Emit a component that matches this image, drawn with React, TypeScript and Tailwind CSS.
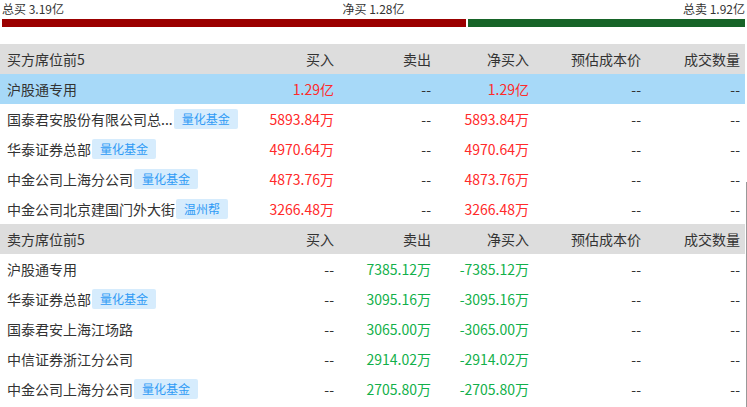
import React from 'react';

type Row = {
  name: string;
  tag?: string;
  buy: string;
  sell: string;
  net: string;
  highlight?: boolean;
};

const buyRows: Row[] = [
  { name: '沪股通专用', buy: '1.29亿', sell: '--', net: '1.29亿', highlight: true },
  { name: '国泰君安股份有限公司总...', tag: '量化基金', buy: '5893.84万', sell: '--', net: '5893.84万' },
  { name: '华泰证券总部', tag: '量化基金', buy: '4970.64万', sell: '--', net: '4970.64万' },
  { name: '中金公司上海分公司', tag: '量化基金', buy: '4873.76万', sell: '--', net: '4873.76万' },
  { name: '中金公司北京建国门外大街', tag: '温州帮', buy: '3266.48万', sell: '--', net: '3266.48万' },
];

const sellRows: Row[] = [
  { name: '沪股通专用', buy: '--', sell: '7385.12万', net: '-7385.12万' },
  { name: '华泰证券总部', tag: '量化基金', buy: '--', sell: '3095.16万', net: '-3095.16万' },
  { name: '国泰君安上海江场路', buy: '--', sell: '3065.00万', net: '-3065.00万' },
  { name: '中信证券浙江分公司', buy: '--', sell: '2914.02万', net: '-2914.02万' },
  { name: '中金公司上海分公司', tag: '量化基金', buy: '--', sell: '2705.80万', net: '-2705.80万' },
];

const cols = 'grid grid-cols-[240px_94px_97px_98px_112px_99px] items-center h-[30px] w-[745px] pr-[5px]';

function Header({ title }: { title: string }) {
  return (
    <div className={`${cols} bg-[#dddddd] text-[#333]`}>
      <div className="pl-[7px]">{title}</div>
      <div className="text-right">买入</div>
      <div className="text-right">卖出</div>
      <div className="text-right">净买入</div>
      <div className="text-right">预估成本价</div>
      <div className="text-right">成交数量</div>
    </div>
  );
}

function TableRow({ row, side }: { row: Row; side: 'buy' | 'sell' }) {
  const red = 'text-[#ff2a2a]';
  const green = 'text-[#12b04a]';
  return (
    <div className={`${cols} ${row.highlight ? 'bg-[#a7d9f8]' : 'bg-white'}`}>
      <div className="pl-[7px] flex items-center whitespace-nowrap">
        <span>{row.name}</span>
        {row.tag && (
          <span className="ml-px h-5 px-2 flex items-center rounded-[2px] bg-[#d6ecfd] text-[#2f9bf5] text-xs">
            {row.tag}
          </span>
        )}
      </div>
      <div className={`text-right ${side === 'buy' ? red : ''}`}>{row.buy}</div>
      <div className={`text-right ${side === 'sell' ? green : ''}`}>{row.sell}</div>
      <div className={`text-right ${side === 'buy' ? red : green}`}>{row.net}</div>
      <div className="text-right">--</div>
      <div className="text-right">--</div>
    </div>
  );
}

export default function App() {
  return (
    <div
      className="relative w-[747px] h-[407px] overflow-hidden bg-white text-[14px] text-[#333]"
      style={{ fontFamily: '"Noto Sans CJK SC", "Noto Sans", sans-serif' }}
    >
      {/* Summary */}
      <div className="flex items-center justify-between h-[17px] px-[2px] text-xs leading-none">
        <span>总买 3.19亿</span>
        <span>净买 1.28亿</span>
        <span>总卖 1.92亿</span>
      </div>
      <div className="flex gap-[2px] mt-[2px] mx-[2px] w-[743px] h-2">
        <div className="w-[464px] bg-[#9b0000]" />
        <div className="flex-1 bg-[#176428]" />
      </div>

      <div className="mt-[17px]">
        <Header title="买方席位前5" />
        {buyRows.map((r, i) => (
          <TableRow key={i} row={r} side="buy" />
        ))}
        <Header title="卖方席位前5" />
        {sellRows.map((r, i) => (
          <TableRow key={i} row={r} side="sell" />
        ))}
      </div>

      {/* scrollbar edge */}
      <div className="absolute left-[746px] top-[182px] bottom-0 w-px bg-[#999]" />
    </div>
  );
}
